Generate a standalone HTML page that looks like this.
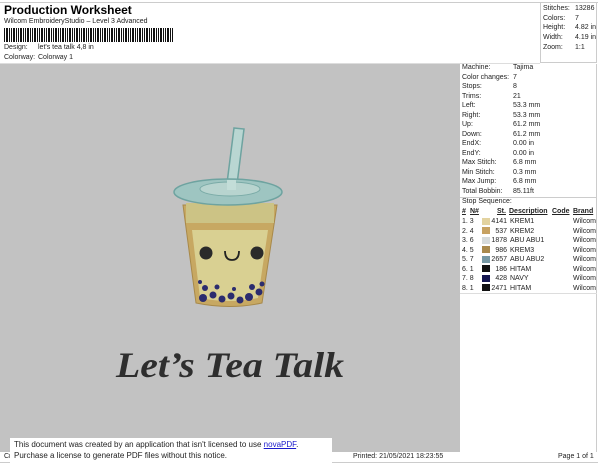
<!DOCTYPE html>
<html><head><meta charset="utf-8"><style>
*{margin:0;padding:0;box-sizing:border-box}
body{width:600px;height:464px;background:#fff;font-family:"Liberation Sans",sans-serif;color:#222;position:relative;overflow:hidden;font-size:7px}
.a{position:absolute;white-space:nowrap}
.bc{position:absolute;left:4px;top:28px;height:14px;width:170px;background:repeating-linear-gradient(90deg,#111 0 1px,#fff 1px 2px,#111 2px 4px,#fff 4px 5px,#111 5px 6px,#fff 6px 7px)}
.sw{position:absolute;width:8px;height:7px}
</style></head><body>
<div class="a" style="left:0;top:2px;width:598px;border-top:1px solid #ccc"></div>
<div class="a" style="left:4px;top:3px;font-size:12px;font-weight:bold;color:#000">Production Worksheet</div>
<div class="a" style="left:4px;top:18px;font-size:7px">Wilcom EmbroideryStudio – Level 3 Advanced</div>
<div class="bc"></div>
<div class="a" style="left:4px;top:44px">Design:</div><div class="a" style="left:38px;top:44px">let's tea talk 4,8 in</div>
<div class="a" style="left:4px;top:54px">Colorway:</div><div class="a" style="left:38px;top:54px">Colorway 1</div>
<div class="a" style="left:0;top:63px;width:540px;border-top:1px solid #ddd"></div>
<div class="a" style="left:540px;top:2px;width:57px;height:61px;border-left:1px solid #ccc;border-right:1px solid #ccc;border-bottom:1px solid #ccc"></div>
<div class="a" style="left:543px;top:4px;line-height:9.7px">Stitches:<br>Colors:<br>Height:<br>Width:<br>Zoom:</div>
<div class="a" style="left:575px;top:4px;line-height:9.7px">13286<br>7<br>4.82 in<br>4.19 in<br>1:1</div>
<div class="a" style="left:0;top:64px;width:460px;height:388px;background:#c2c2c2"></div>
<div class="a" style="left:460px;top:64px;width:137px;height:388px;border-right:1px solid #ccc"></div>
<div class="a" style="left:462px;top:63px;line-height:9.5px">Machine:<br>Color changes:<br>Stops:<br>Trims:<br>Left:<br>Right:<br>Up:<br>Down:<br>EndX:<br>EndY:<br>Max Stitch:<br>Min Stitch:<br>Max Jump:<br>Total Bobbin:</div>
<div class="a" style="left:513px;top:63px;line-height:9.5px">Tajima<br>7<br>8<br>21<br>53.3 mm<br>53.3 mm<br>61.2 mm<br>61.2 mm<br>0.00 in<br>0.00 in<br>6.8 mm<br>0.3 mm<br>6.8 mm<br>85.11ft</div>
<div class="a" style="left:460px;top:197px;width:137px;border-top:1px solid #ccc"></div>
<div class="a" style="left:462px;top:198px">Stop Sequence:</div>
<div class="a" style="left:462px;top:208px;font-weight:bold;text-decoration:underline">#</div>
<div class="a" style="left:470px;top:208px;font-weight:bold;text-decoration:underline">N#</div>
<div class="a" style="left:497px;top:208px;font-weight:bold;text-decoration:underline">St.</div>
<div class="a" style="left:509px;top:208px;font-weight:bold;text-decoration:underline">Description</div>
<div class="a" style="left:552px;top:208px;font-weight:bold;text-decoration:underline">Code</div>
<div class="a" style="left:573px;top:208px;font-weight:bold;text-decoration:underline">Brand</div>
<div class="a" style="left:462px;top:217px;line-height:9.5px">1. 3<br>2. 4<br>3. 6<br>4. 5<br>5. 7<br>6. 1<br>7. 8<br>8. 1</div>
<div class="a" style="left:489px;top:217px;line-height:9.5px;text-align:right;width:18px">4141<br>537<br>1878<br>986<br>2657<br>186<br>428<br>2471</div>
<div class="a" style="left:510px;top:217px;line-height:9.5px">KREM1<br>KREM2<br>ABU ABU1<br>KREM3<br>ABU ABU2<br>HITAM<br>NAVY<br>HITAM</div>
<div class="a" style="left:573px;top:217px;line-height:9.5px">Wilcom<br>Wilcom<br>Wilcom<br>Wilcom<br>Wilcom<br>Wilcom<br>Wilcom<br>Wilcom</div>
<div class="sw" style="left:482px;top:218px;background:#e3d3a0"></div>
<div class="sw" style="left:482px;top:227px;background:#c7a262"></div>
<div class="sw" style="left:482px;top:237px;background:#d6dbdc"></div>
<div class="sw" style="left:482px;top:246px;background:#a98a4e"></div>
<div class="sw" style="left:482px;top:256px;background:#7799a5"></div>
<div class="sw" style="left:482px;top:265px;background:#111"></div>
<div class="sw" style="left:482px;top:275px;background:#141650"></div>
<div class="sw" style="left:482px;top:284px;background:#111"></div>
<div class="a" style="left:460px;top:293px;width:137px;border-top:1px solid #ddd"></div>
<svg class="a" style="left:0;top:64px" width="460" height="388" viewBox="0 64 460 388">
<path d="M183 205 L277 205 L262 303 Q230 310 196 303 Z" fill="#c7a862" stroke="#a8894a"/>
<path d="M192 230 L268 230 L258 298 Q230 304 200 298 Z" fill="#d9d092"/>
<rect x="186" y="203" width="88" height="20" fill="#ccc385"/>
<path d="M234 128 L244 129 L236 192 L226 191 Z" fill="#b9d6d2" stroke="#6ea3a0" stroke-width="1.5"/>
<ellipse cx="228" cy="192" rx="54" ry="13" fill="#9ec5c1" stroke="#6ea3a0" stroke-width="1.5"/>
<ellipse cx="230" cy="189" rx="30" ry="7" fill="#b8d4cf" stroke="#7aaba7"/>
<rect x="227" y="180" width="9" height="10" fill="#c3ddd8"/>
<circle cx="206" cy="253" r="6.5" fill="#2a2a2a"/><circle cx="257" cy="253" r="6.5" fill="#2a2a2a"/>
<path d="M225 251 Q225 260 232 260 Q239 260 239 251" fill="none" stroke="#222" stroke-width="1.8"/>
<g fill="#2b2c6e">
<circle cx="203" cy="298" r="4"/><circle cx="213" cy="295" r="3.5"/><circle cx="222" cy="299" r="3.5"/><circle cx="231" cy="296" r="3.5"/><circle cx="240" cy="300" r="3.5"/><circle cx="249" cy="297" r="4"/><circle cx="259" cy="292" r="3.5"/><circle cx="205" cy="288" r="3"/><circle cx="217" cy="287" r="2.5"/><circle cx="252" cy="287" r="3"/><circle cx="262" cy="284" r="2.5"/><circle cx="200" cy="282" r="2"/><circle cx="234" cy="289" r="2"/>
</g>
<text x="230" y="377" text-anchor="middle" font-family="Liberation Serif,serif" font-style="italic" font-weight="bold" font-size="36" fill="#2e2e2e" textLength="228" lengthAdjust="spacingAndGlyphs">Let’s Tea Talk</text>
</svg>
<div class="a" style="left:4px;top:453px">Cr</div>
<div class="a" style="left:353px;top:453px">Printed: 21/05/2021 18:23:55</div>
<div class="a" style="left:558px;top:453px">Page 1 of 1</div>
<div class="a" style="left:0;top:462px;width:598px;border-top:1px solid #ccc"></div>
<div class="a" style="left:10px;top:438px;width:322px;height:26px;background:#fff;padding:2px 0 0 4px;font-size:8px;line-height:10.5px">This document was created by an application that isn't licensed to use <span style="color:#1a1acc;text-decoration:underline">novaPDF</span>.<br>Purchase a license to generate PDF files without this notice.</div>
</body></html>
